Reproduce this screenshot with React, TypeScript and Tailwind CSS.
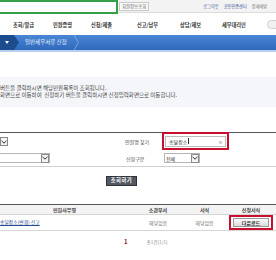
import React from 'react';

const font = "font-['Noto_Sans_CJK_KR','Noto_Sans',sans-serif]";

function SelectArrow() {
  return (
    <span className="flex h-[9px] w-[8px] shrink-0 items-center justify-center border border-[#8a8a8a] bg-[#f4f4f4]">
      <svg width="6" height="4" viewBox="0 0 6 4">
        <path d="M0.5 0.8 L3 3.2 L5.5 0.8" fill="none" stroke="#333" strokeWidth="1" />
      </svg>
    </span>
  );
}

const navItems = [
  { label: '조회/발급', w: 'w-[40px]' },
  { label: '민원증명', w: 'w-[38px]' },
  { label: '신청/제출', w: 'w-[46px]' },
  { label: '신고/납부', w: 'w-[43px]' },
  { label: '상담/제보', w: 'w-[42px]' },
  { label: '세무대리인', w: 'w-[45px]' },
];

export default function App() {
  return (
    <div className={`h-[260px] w-[276px] overflow-hidden bg-white text-[#333] ${font}`}>
      {/* top strip */}
      <div className="flex h-[14px]">
        <div className="h-[14px] w-[118px] shrink-0 border-2 border-l-0 border-[#35a048] bg-white" />
        <div className="flex h-[13px] flex-1 items-center border-b border-[#dcdcdc] bg-[#f3f3f3]">
          <span className="ml-[1px] border border-[#c9c9c9] bg-[#fafafa] px-[2px] text-[4.4px] leading-[7px] text-[#666]">
            회원정보조회
          </span>
          <div className="ml-[54px] flex gap-[5px] whitespace-nowrap text-[4.2px] leading-none">
            <span className="text-[#3b5b9c]">로그아웃</span>
            <span className="text-[#3b5b9c]">공인인증센터</span>
            <span className="text-[#777]">장애예방</span>
          </div>
        </div>
      </div>

      {/* main nav */}
      <div className="flex h-[21px] items-center pl-[13px]">
        {navItems.map((item) => (
          <span
            key={item.label}
            className={`${item.w} shrink-0 whitespace-nowrap text-[5.2px] font-bold leading-none text-[#333]`}
          >
            {item.label}
          </span>
        ))}
        <span className="h-[9px] w-[14px] shrink-0 rounded-full border border-[#cfcfcf] bg-[#f1f1f1]" />
      </div>

      {/* breadcrumb bar */}
      <div className="flex h-[15px] items-stretch bg-gradient-to-b from-[#4a86d6] to-[#2e69bb]">
        <div className="flex w-[14px] items-center justify-center bg-[#1d4c8e]">
          <svg width="4" height="3" viewBox="0 0 4 3">
            <path d="M0 0 L4 0 L2 3 Z" fill="#fff" />
          </svg>
        </div>
        <svg width="5" height="15" viewBox="0 0 5 15" className="shrink-0">
          <path d="M0 0 L5 7.5 L0 15 Z" fill="#1d4c8e" />
        </svg>
        <span className="ml-[6px] flex items-center whitespace-nowrap text-[5.5px] leading-none text-[#e8f0fb]">
          일반세무서류 신청
        </span>
        <svg width="5" height="15" viewBox="0 0 5 15" className="ml-[7px] shrink-0">
          <path d="M0 0 L4.5 7.5 L0 15" fill="none" stroke="#8fb4e6" strokeWidth="0.8" />
        </svg>
      </div>
      <div className="h-[2px] bg-[#b7cfee]" />

      {/* info box */}
      <div className="mt-[25px] flex h-[30px] flex-col justify-center gap-[1.5px] bg-[#f5f6f9] text-[5.5px] leading-[5.5px] text-[#444]">
        <p className="whitespace-pre">버튼을 클릭하시면 해당민원목록이 조회됩니다.</p>
        <p className="whitespace-pre">화면으로 이동하여  신청하기 버튼을 클릭하시면 신청입력화면으로 이동합니다.</p>
      </div>

      {/* search form */}
      <div className="mt-[25px] border-t border-b border-t-[#555] border-b-[#cfcfcf] text-[5px] leading-none">
        <div className="grid h-[17px] grid-cols-[125px_37px_1fr] items-center">
          <div className="flex">
            <SelectArrow />
          </div>
          <span className="whitespace-nowrap text-[#444]">민원명 찾기</span>
          <div className="-mt-[1px] flex h-[18px] w-[67px] items-center border-2 border-[#c8102e] px-[1px]">
            <div className="flex h-[11px] flex-1 items-center border border-[#bdbdbd] bg-white pl-[3px] pr-[2px]">
              <span className="text-[#333]">송달장소</span>
              <span className="ml-[0.5px] h-[6px] w-[0.6px] bg-[#333]" />
              <span className="ml-auto text-[5px] text-[#555]">×</span>
            </div>
          </div>
        </div>
        <div className="grid h-[16px] grid-cols-[126px_38px_1fr] items-center">
          <div className="flex">
            <div className="flex h-[10px] w-[50px] items-center justify-end border border-l-0 border-[#b5b5b5] bg-white">
              <SelectArrow />
            </div>
          </div>
          <span className="whitespace-nowrap text-[#444]">신청구분</span>
          <div className="flex h-[10px] w-[36px] items-center border border-[#b5b5b5] bg-white pl-[1px]">
            <span className="text-[#333]">전체</span>
            <span className="ml-auto">
              <SelectArrow />
            </span>
          </div>
        </div>
      </div>

      {/* search button */}
      <div className="mt-[9px] flex pl-[106px]">
        <button className="flex h-[10px] w-[31px] items-center justify-center border border-[#2f3338] bg-[#535960] text-[5.3px] font-bold leading-none tracking-[0.5px] text-white">
          조회하기
        </button>
      </div>

      {/* result table */}
      <div className="-ml-[6px] mt-[18px] w-[282px] text-[5px] leading-none">
        <div className="grid h-[11px] grid-cols-[141px_46px_47px_46px] items-center border-t border-b border-t-[#555] border-b-[#d6d6d6] bg-[#f3f3f3] font-bold text-[#444]">
          <span className="text-center">민원사무명</span>
          <span className="text-center">소관부서</span>
          <span className="text-center">서식</span>
          <span className="text-center">신청서식</span>
        </div>
        <div className="grid h-[16px] grid-cols-[141px_46px_47px_46px] items-center border-b border-[#d6d6d6]">
          <span className="whitespace-nowrap pl-[6px] text-[4.8px] text-[#23498f] underline">송달장소(변경) 신고</span>
          <span className="text-center text-[#777]">해당없음</span>
          <span className="text-center text-[#777]">해당없음</span>
          <div className="flex justify-center">
            <div className="flex h-[15px] w-[44px] items-center justify-center border-2 border-[#c8102e] bg-white">
              <span className="flex h-[9px] w-[36px] items-center justify-center border border-[#9a9a9a] bg-gradient-to-b from-[#fbfbfb] to-[#dcdcdc] font-bold text-[#333]">
                다운로드
              </span>
            </div>
          </div>
        </div>
      </div>

      {/* pagination */}
      <div className="mt-[8px] flex items-center pl-[124px] leading-none">
        <span className="text-[6px] font-bold text-[#8e1b1b]">1</span>
        <span className="ml-[19px] text-[4.6px] text-[#888]">총1건(1/1)</span>
      </div>
    </div>
  );
}
